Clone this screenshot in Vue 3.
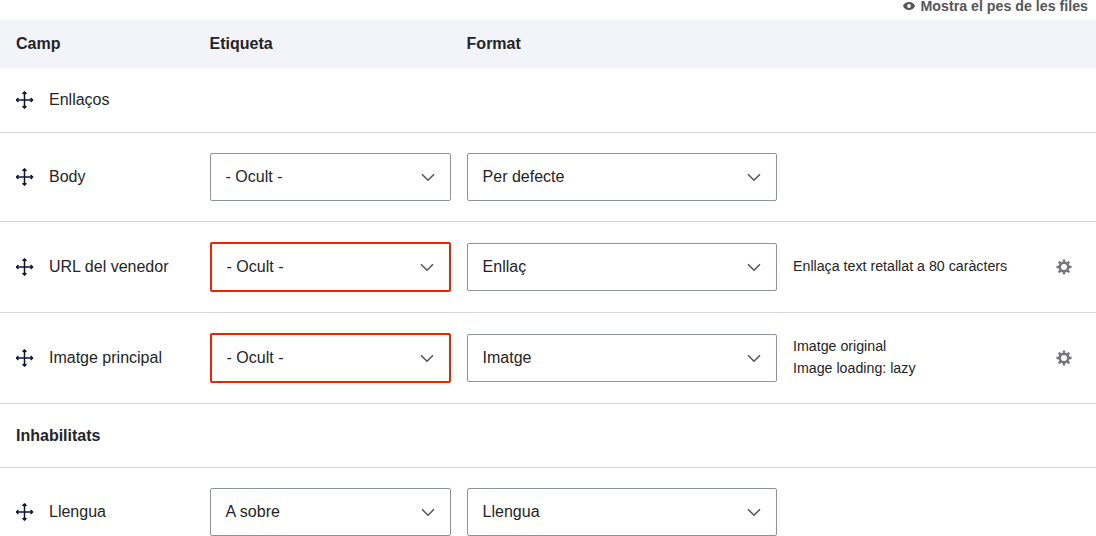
<template>
  <div class="page">
    <div class="toggle-row">
      <button class="toggle-weights" type="button">
        <svg class="eye" width="12" height="8" viewBox="0 0 12 8">
          <path d="M6 0C3.300 0 1.100 1.600 0 4c1.100 2.400 3.300 4 6 4s4.900-1.600 6-4C10.900 1.600 8.700 0 6 0z" fill="#55565b" />
          <circle cx="6" cy="4" r="1.900" fill="#fff" />
        </svg>
        Mostra el pes de les files
      </button>
    </div>

    <table class="fields">
      <colgroup>
        <col class="col-field" />
        <col class="col-label" />
        <col class="col-format" />
        <col />
        <col class="col-settings" />
      </colgroup>
      <thead>
        <tr>
          <th>Camp</th>
          <th>Etiqueta</th>
          <th>Format</th>
          <th></th>
          <th></th>
        </tr>
      </thead>
      <tbody>
        <template v-for="row in rows" :key="row.name">
          <tr v-if="row.region" class="region">
            <td colspan="5">{{ row.name }}</td>
          </tr>
          <tr v-else class="field" :class="{ 'field-empty': !row.format }">
            <td>
              <div class="field-name">
                <svg class="handle" width="18" height="18" viewBox="0 0 18 18" fill="none" stroke="#0b1433" stroke-width="1.500">
                  <path d="M8.500 1v16M.5 9h16" />
                  <path d="M6.600 2.900L8.500 1l1.900 1.900M6.600 15.100L8.500 17l1.900-1.900M2.400 7.100L.5 9l1.900 1.900M14.600 7.100L16.500 9l-1.900 1.900" />
                </svg>
                <span>{{ row.name }}</span>
              </div>
            </td>
            <template v-if="row.format">
              <td>
                <div class="select" :class="{ error: row.error }">
                  <span>{{ row.label }}</span>
                  <svg class="chevron" width="14" height="9" viewBox="0 0 14 9" fill="none" stroke="#55565b" stroke-width="1.600">
                    <path d="M1 1.200l6 6 6-6" />
                  </svg>
                </div>
              </td>
              <td>
                <div class="select">
                  <span>{{ row.format }}</span>
                  <svg class="chevron" width="14" height="9" viewBox="0 0 14 9" fill="none" stroke="#55565b" stroke-width="1.600">
                    <path d="M1 1.200l6 6 6-6" />
                  </svg>
                </div>
              </td>
              <td class="summary">
                <div v-for="line in row.summary" :key="line">{{ line }}</div>
              </td>
              <td class="settings">
                <svg v-if="row.summary" width="16" height="16" viewBox="0 0 16 16" fill="none" stroke="#75757a">
                  <circle cx="8" cy="8" r="4.300" stroke-width="2.600" />
                  <path stroke-width="2.400" d="M8 .5v2.500M8 13v2.500M.5 8H3M13 8h2.500M2.700 2.700l1.800 1.800M11.500 11.500l1.800 1.800M2.700 13.300l1.800-1.800M11.500 4.500l1.800-1.800" />
                </svg>
              </td>
            </template>
            <td v-else colspan="4"></td>
          </tr>
        </template>
      </tbody>
    </table>
  </div>
</template>

<script setup>
const rows = [
  { name: 'Enllaços' },
  { name: 'Body', label: '- Ocult -', format: 'Per defecte' },
  {
    name: 'URL del venedor',
    label: '- Ocult -',
    format: 'Enllaç',
    error: true,
    summary: ['Enllaça text retallat a 80 caràcters']
  },
  {
    name: 'Imatge principal',
    label: '- Ocult -',
    format: 'Imatge',
    error: true,
    summary: ['Imatge original', 'Image loading: lazy']
  },
  { name: 'Inhabilitats', region: true },
  { name: 'Llengua', label: 'A sobre', format: 'Llengua' }
]
</script>

<style>
html,
body {
  margin: 0;
  overflow: hidden;
  background: #fff;
}
</style>

<style scoped>
.page {
  width: 1096px;
  font-family: "Liberation Sans", Arial, sans-serif;
  font-size: 16px;
  color: #232429;
}

.toggle-row {
  display: flex;
  justify-content: flex-end;
  height: 20px;
  padding-right: 8px;
  margin-top: -4px;
  margin-bottom: 4px;
}

.toggle-weights {
  display: flex;
  align-items: center;
  gap: 5px;
  height: 20px;
  padding: 0;
  border: 0;
  background: none;
  color: #55565b;
  font: bold 14.22px "Liberation Sans", Arial, sans-serif;
}

.fields {
  width: 1096px;
  table-layout: fixed;
  border-collapse: collapse;
}

.col-field {
  width: 193.6px;
}

.col-label {
  width: 257px;
}

.col-format {
  width: 326px;
}

.col-settings {
  width: 64px;
}

th {
  height: 48px;
  padding: 0 0 0 16px;
  background: #f3f4f9;
  text-align: left;
  font-weight: bold;
  line-height: 24px;
}

td {
  padding: 20px 0 20px 16px;
  border-bottom: 1px solid #d3d4d9;
  vertical-align: middle;
}

.region td {
  height: 23px;
  font-weight: bold;
  line-height: 23px;
}

.field-name {
  display: flex;
  align-items: center;
  gap: 15px;
  line-height: 24px;
}

.handle {
  flex-shrink: 0;
}

.select {
  display: flex;
  align-items: center;
  justify-content: space-between;
  box-sizing: border-box;
  height: 48px;
  padding: 0 15px;
  background: #fff;
  border: 1px solid #8e929c;
  border-radius: 2px;
}

.select.error {
  height: 50px;
  border: 2px solid #e62600;
}

.summary {
  padding: 0 0 2px 16.4px;
  font-size: 14.22px;
  line-height: 22px;
}

.settings {
  padding: 0;
}

.settings svg {
  display: block;
  margin: 0 auto;
}
</style>
